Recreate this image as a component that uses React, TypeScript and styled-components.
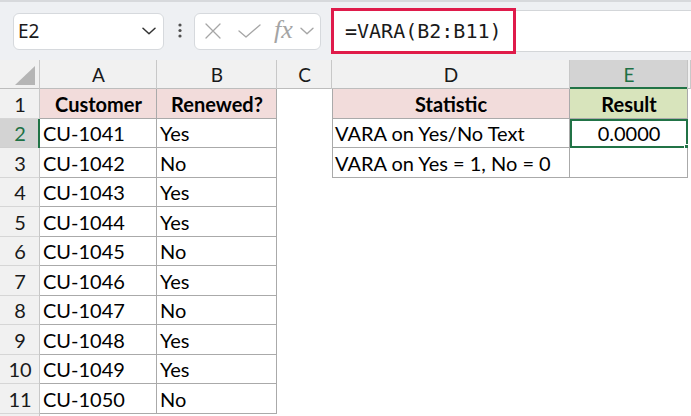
import React from 'react';
import styled, { createGlobalStyle } from 'styled-components';

const Global = createGlobalStyle`
  html, body { margin: 0; padding: 0; background: #ffffff; }
  body { width: 691px; height: 416px; overflow: hidden; font-family: Lato, "Liberation Sans", sans-serif; }
  #root { width: 691px; height: 416px; }
`;

const Page = styled.div`
  display: flex;
  flex-direction: column;
  width: 691px;
  height: 416px;
  overflow: hidden;
  background: #ffffff;
`;

const Toolbar = styled.div`
  height: 60px;
  box-sizing: border-box;
  flex: none;
  background: #eef0f3;
  border-top: 2px solid #d7d9dc;
  display: flex;
  align-items: center;
  padding-left: 13px;
`;

const NameBox = styled.div`
  width: 151px;
  height: 37px;
  box-sizing: border-box;
  background: #ffffff;
  border: 1px solid #d6d9dd;
  border-radius: 6px;
  display: flex;
  align-items: center;
  justify-content: space-between;
  padding: 0 7px 0 4px;
  font-family: "Noto Sans", "Open Sans", sans-serif;
  font-size: 19px;
  color: #1a1a1a;
`;

const Dots = styled.svg`
  margin-left: 14px;
  flex: none;
`;

const FxBox = styled.div`
  margin-left: 12px;
  width: 127px;
  height: 37px;
  box-sizing: border-box;
  background: #ffffff;
  border: 1px solid #d6d9dd;
  border-radius: 6px;
  display: flex;
  align-items: center;
  padding-left: 8px;
`;

const Icon = styled.svg<{ $ml?: number }>`
  flex: none;
  margin-left: ${(p) => p.$ml ?? 0}px;
`;

const FxText = styled.span`
  margin-left: 13px;
  font-family: "Liberation Serif", "DejaVu Serif", serif;
  font-style: italic;
  font-size: 26px;
  color: #a4a4a4;
  line-height: 1;
  margin-top: -3px;
`;

const FormulaBar = styled.div`
  margin-left: 10px;
  flex: 1;
  height: 42px;
  box-sizing: border-box;
  background: #ffffff;
  border-top: 1px solid #d3d6d9;
  border-bottom: 1px solid #d3d6d9;
  display: flex;
  align-items: center;
`;

const Highlight = styled.div`
  width: 185px;
  height: 46px;
  box-sizing: border-box;
  border: 3px solid #df1b4b;
  display: flex;
  align-items: center;
  padding-left: 11px;
  font-family: "DejaVu Sans Mono", "Liberation Mono", monospace;
  font-size: 20px;
  color: #1a1a1a;
`;

const Sheet = styled.div`
  display: grid;
  grid-template-columns: 40px 117px 120px 55px 238px 118px 1fr;
  grid-template-rows: 29px repeat(12, 29.5px);
  flex: none;
`;

const ColHead = styled.div<{ $sel?: boolean }>`
  background: ${(p) => (p.$sel ? '#d3d3d3' : '#f1f1f1')};
  color: ${(p) => (p.$sel ? '#1e7145' : '#1a1a1a')};
  box-shadow: ${(p) =>
    p.$sel
      ? 'inset -1px 0 0 #c4c4c4, inset 0 -2px 0 #217346'
      : 'inset -1px 0 0 #c8c8c8, inset 0 -1px 0 #bdbdbd'};
  display: flex;
  align-items: center;
  justify-content: center;
  font-size: 19px;
  position: relative;
`;

const CornerMark = styled.svg`
  position: absolute;
  right: 5px;
  bottom: 4px;
`;

const RowHead = styled.div<{ $sel?: boolean }>`
  background: ${(p) => (p.$sel ? '#d3d3d3' : '#f1f1f1')};
  color: ${(p) => (p.$sel ? '#1e7145' : '#1a1a1a')};
  box-shadow: ${(p) =>
    p.$sel
      ? 'inset -2px 0 0 #217346, inset 0 -1px 0 #cfcfcf'
      : 'inset -1px 0 0 #c8c8c8, inset 0 -1px 0 #d6d6d6'};
  display: flex;
  align-items: center;
  justify-content: center;
  font-size: 20px;
`;

const Cell = styled.div<{
  $fill?: string;
  $bold?: boolean;
  $center?: boolean;
  $table?: boolean;
  $leftEdge?: boolean;
  $sel?: boolean;
}>`
  background: ${(p) => p.$fill ?? '#ffffff'};
  font-weight: ${(p) => (p.$bold ? 700 : 400)};
  display: flex;
  align-items: center;
  justify-content: ${(p) => (p.$center ? 'center' : 'flex-start')};
  padding-left: ${(p) => (p.$center ? 0 : 3)}px;
  font-size: 20px;
  color: #000;
  white-space: nowrap;
  position: relative;
  box-shadow: ${(p) => {
    const parts: string[] = [];
    if (p.$sel) parts.push('inset 0 0 0 2px #217346');
    if (p.$table) parts.push('inset -1px -1px 0 #aaaaaa');
    if (p.$leftEdge) parts.push('inset 1px 0 0 #aaaaaa');
    return parts.length ? parts.join(', ') : 'none';
  }};
  ${(p) =>
    p.$sel
      ? `&::after {
          content: '';
          position: absolute;
          right: -4px;
          bottom: -4px;
          width: 6px;
          height: 6px;
          background: #217346;
          border: 1px solid #ffffff;
        }`
      : ''}
`;

const customers = ['CU-1041', 'CU-1042', 'CU-1043', 'CU-1044', 'CU-1045', 'CU-1046', 'CU-1047', 'CU-1048', 'CU-1049', 'CU-1050'];
const renewed = ['Yes', 'No', 'Yes', 'Yes', 'No', 'Yes', 'No', 'Yes', 'Yes', 'No'];

const PINK = '#f2dcdb';
const GREEN = '#d8e4bc';

type CellSpec = { text?: string; fill?: string; bold?: boolean; center?: boolean; table?: boolean; leftEdge?: boolean; sel?: boolean };

function rowCells(r: number): CellSpec[] {
  const cells: CellSpec[] = [];
  if (r === 1) {
    cells.push({ text: 'Customer', fill: PINK, bold: true, center: true, table: true });
    cells.push({ text: 'Renewed?', fill: PINK, bold: true, center: true, table: true });
  } else if (r <= 11) {
    cells.push({ text: customers[r - 2], table: true });
    cells.push({ text: renewed[r - 2], table: true });
  } else {
    cells.push({}, {});
  }
  cells.push({});
  if (r === 1) {
    cells.push({ text: 'Statistic', fill: PINK, bold: true, center: true, table: true, leftEdge: true });
    cells.push({ text: 'Result', fill: GREEN, bold: true, center: true, table: true });
  } else if (r === 2) {
    cells.push({ text: 'VARA on Yes/No Text', table: true, leftEdge: true });
    cells.push({ text: '0.0000', center: true, table: true, sel: true });
  } else if (r === 3) {
    cells.push({ text: 'VARA on Yes = 1, No = 0', table: true, leftEdge: true });
    cells.push({ table: true });
  } else {
    cells.push({}, {});
  }
  cells.push({});
  return cells;
}

export default function App() {
  const rows = Array.from({ length: 12 }, (_, i) => i + 1);
  return (
    <Page>
      <Global />
      <Toolbar>
        <NameBox>
          <span>E2</span>
          <Icon width="14" height="8" viewBox="0 0 14 8">
            <path d="M1 1.2 L7 6.8 L13 1.2" fill="none" stroke="#333" strokeWidth="1.5" strokeLinecap="round" strokeLinejoin="round" />
          </Icon>
        </NameBox>
        <Dots width="4" height="16" viewBox="0 0 4 16">
          <circle cx="2" cy="2" r="1.6" fill="#505050" />
          <circle cx="2" cy="7.5" r="1.6" fill="#505050" />
          <circle cx="2" cy="13" r="1.6" fill="#505050" />
        </Dots>
        <FxBox>
          <Icon width="18" height="16" viewBox="0 0 18 16" $ml={1}>
            <path d="M2 1 L16 15 M16 1 L2 15" stroke="#a6a6a6" strokeWidth="1.3" strokeLinecap="round" />
          </Icon>
          <Icon width="23" height="14" viewBox="0 0 23 14" $ml={16}>
            <path d="M1 7 L8 13 L22 1" fill="none" stroke="#a6a6a6" strokeWidth="1.3" strokeLinecap="round" strokeLinejoin="round" />
          </Icon>
          <FxText>fx</FxText>
          <Icon width="14" height="8" viewBox="0 0 14 8" $ml={7}>
            <path d="M1 1.2 L7 6.8 L13 1.2" fill="none" stroke="#a6a6a6" strokeWidth="1.4" strokeLinecap="round" strokeLinejoin="round" />
          </Icon>
        </FxBox>
        <FormulaBar>
          <Highlight>=VARA(B2:B11)</Highlight>
        </FormulaBar>
      </Toolbar>
      <Sheet>
        <ColHead>
          <CornerMark width="20" height="19" viewBox="0 0 20 19">
            <path d="M20 0 L20 19 L0 19 Z" fill="#b5b5b5" />
          </CornerMark>
        </ColHead>
        {['A', 'B', 'C', 'D', 'E', ''].map((l, i) => (
          <ColHead key={'h' + i} $sel={l === 'E'}>
            {l}
          </ColHead>
        ))}
        {rows.map((r) => (
          <React.Fragment key={r}>
            <RowHead $sel={r === 2}>{r <= 11 ? r : ''}</RowHead>
            {rowCells(r).map((c, j) => (
              <Cell
                key={j}
                $fill={c.fill}
                $bold={c.bold}
                $center={c.center}
                $table={c.table}
                $leftEdge={c.leftEdge}
                $sel={c.sel}
              >
                {c.text}
              </Cell>
            ))}
          </React.Fragment>
        ))}
      </Sheet>
    </Page>
  );
}
